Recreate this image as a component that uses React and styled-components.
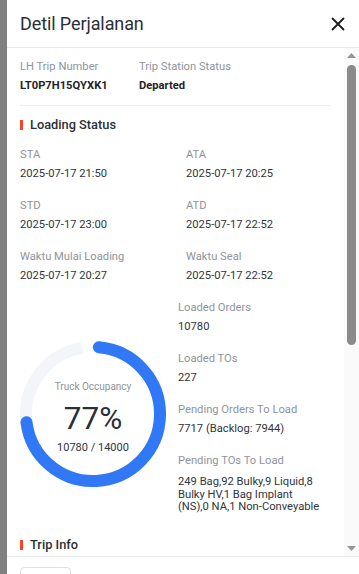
import React from "react";
import styled, { createGlobalStyle } from "styled-components";

const GlobalStyle = createGlobalStyle`
  html, body { margin: 0; padding: 0; height: 100%; }
  body { background: #808080; font-family: Roboto, "Noto Sans", Arial, sans-serif; }
  #root { height: 100%; }
  * { box-sizing: border-box; }
`;

const Page = styled.div`
  height: 100vh;
  display: flex;
  justify-content: flex-end;
`;

const Drawer = styled.div`
  width: 352px;
  height: 100%;
  background: #fff;
  display: flex;
  flex-direction: column;
`;

const Header = styled.div`
  height: 48px;
  flex: none;
  border-bottom: 1px solid #e6e8eb;
  padding: 0 13px;
  display: flex;
  align-items: center;
  justify-content: space-between;
`;

const Title = styled.div`
  font-size: 18px;
  color: #2b2f36;
  letter-spacing: -0.1px;
`;

const CloseBtn = styled.button`
  border: 0;
  background: none;
  padding: 0;
  width: 14px;
  height: 14px;
  margin-right: 1px;
  display: flex;
  cursor: pointer;
`;

const Body = styled.div`
  flex: 1;
  min-height: 0;
  display: flex;
`;

const Content = styled.div`
  flex: 1;
  overflow: hidden;
  padding: 11px 13px 0;
`;

const ScrollTrack = styled.div`
  width: 15px;
  flex: none;
  background: #fafafa;
  display: flex;
  flex-direction: column;
  align-items: center;
`;

const Arrow = styled.div`
  height: 15px;
  flex: none;
  display: flex;
  align-items: center;
  justify-content: center;
  margin-top: ${(p) => (p.$down ? "auto" : "0")};
  svg { transform: ${(p) => (p.$down ? "rotate(180deg)" : "none")}; }
`;

const Thumb = styled.div`
  width: 9px;
  height: 280px;
  margin-top: 2px;
  border-radius: 5px;
  background: #8b8b8b;
`;

const InfoRow = styled.div`
  display: flex;
  padding-bottom: 11px;
  border-bottom: 1px solid #eceef1;
`;

const Field = styled.div`
  width: ${(p) => p.$w || "auto"};
  margin-top: ${(p) => p.$mt ?? 0}px;
  margin-bottom: ${(p) => p.$mb ?? 16}px;
`;

const Label = styled.div`
  font-size: 11.2px;
  line-height: 16px;
  color: #8f949c;
  margin-bottom: 3px;
  white-space: nowrap;
`;

const Value = styled.div`
  font-size: 11.2px;
  line-height: ${(p) => (p.$tight ? "12.5px" : "16px")};
  color: ${(p) => (p.$bold ? "#1f2329" : "#30343b")};
  font-weight: ${(p) => (p.$bold ? 700 : 400)};
  padding-top: ${(p) => (p.$tight ? "4px" : "0")};
`;

const SectionTitle = styled.div`
  display: flex;
  align-items: center;
  gap: 7px;
  font-size: 12.8px;
  line-height: 20px;
  font-weight: 500;
  color: #2b2f36;
  margin: ${(p) => p.$m || "9px 0 12px"};
  &::before {
    content: "";
    width: 3px;
    height: 10px;
    background: #f2452b;
  }
`;

const Grid = styled.div`
  display: grid;
  grid-template-columns: 166px 1fr;
`;

const Split = styled.div`
  display: flex;
  align-items: flex-start;
`;

const RingWrap = styled.div`
  position: relative;
  width: 146px;
  height: 146px;
  margin-top: 41px;
  flex: none;
`;

const RingText = styled.div`
  position: absolute;
  inset: 0;
  display: flex;
  flex-direction: column;
  align-items: center;
  padding-top: 39px;
`;

const RingLabel = styled.div`
  font-size: 10px;
  line-height: 14px;
  color: #8f949c;
`;

const RingPct = styled.div`
  font-size: 31.5px;
  line-height: 38px;
  color: #2b2f36;
  margin: 6px 0 2px;
`;

const RingSub = styled.div`
  font-size: 11px;
  line-height: 16px;
  color: #30343b;
`;

const RightCol = styled.div`
  margin-left: 12px;
  width: 144px;
`;

const Footer = styled.div`
  height: 18px;
  flex: none;
  border-top: 1px solid #e6e8eb;
  padding: 10px 13px 0;
  overflow: hidden;
`;

const FooterBtn = styled.div`
  width: 51px;
  height: 30px;
  border: 1px solid #dcdfe6;
  border-radius: 4px;
`;

function polar(cx, cy, r, deg) {
  const a = ((deg - 90) * Math.PI) / 180;
  return [cx + r * Math.cos(a), cy + r * Math.sin(a)];
}
function arc(cx, cy, r, a0, a1) {
  const [x0, y0] = polar(cx, cy, r, a0);
  const [x1, y1] = polar(cx, cy, r, a1);
  const large = a1 - a0 > 180 ? 1 : 0;
  return `M ${x0} ${y0} A ${r} ${r} 0 ${large} 1 ${x1} ${y1}`;
}

function Ring() {
  const c = 73;
  const r = 67;
  return (
    <RingWrap>
      <svg width="146" height="146" viewBox="0 0 146 146">
        <path d={arc(c, c, r, 262, 351)} fill="none" stroke="#f3f5f9" strokeWidth="12" />
        <path d={arc(c, c, r, 5, 263)} fill="none" stroke="#3178f6" strokeWidth="12" strokeLinecap="round" />
      </svg>
      <RingText>
        <RingLabel>Truck Occupancy</RingLabel>
        <RingPct>77%</RingPct>
        <RingSub>10780 / 14000</RingSub>
      </RingText>
    </RingWrap>
  );
}

const Tri = () => (
  <svg width="9" height="5" viewBox="0 0 9 5">
    <path d="M0 5 L4.5 0 L9 5 Z" fill="#959595" />
  </svg>
);

const times = [
  ["STA", "2025-07-17 21:50"],
  ["ATA", "2025-07-17 20:25"],
  ["STD", "2025-07-17 23:00"],
  ["ATD", "2025-07-17 22:52"],
  ["Waktu Mulai Loading", "2025-07-17 20:27"],
  ["Waktu Seal", "2025-07-17 22:52"],
];

const counts = [
  ["Loaded Orders", "10780"],
  ["Loaded TOs", "227"],
  ["Pending Orders To Load", "7717 (Backlog: 7944)"],
];

export default function App() {
  return (
    <>
      <GlobalStyle />
      <Page>
        <Drawer>
          <Header>
            <Title>Detil Perjalanan</Title>
            <CloseBtn aria-label="close">
              <svg width="14" height="14" viewBox="0 0 14 14">
                <path d="M1.5 1.5 L12.5 12.5 M12.5 1.5 L1.5 12.5" stroke="#1a1a1a" strokeWidth="1.8" strokeLinecap="round" />
              </svg>
            </CloseBtn>
          </Header>
          <Body>
            <Content>
              <InfoRow>
                <Field $w="119px" $mb={0}>
                  <Label>LH Trip Number</Label>
                  <Value $bold>LT0P7H15QYXK1</Value>
                </Field>
                <Field $mb={0}>
                  <Label>Trip Station Status</Label>
                  <Value $bold>Departed</Value>
                </Field>
              </InfoRow>
              <SectionTitle>Loading Status</SectionTitle>
              <Grid>
                {times.map(([l, v]) => (
                  <Field key={l}>
                    <Label>{l}</Label>
                    <Value>{v}</Value>
                  </Field>
                ))}
              </Grid>
              <Split>
                <Ring />
                <RightCol>
                  {counts.map(([l, v]) => (
                    <Field key={l}>
                      <Label>{l}</Label>
                      <Value>{v}</Value>
                    </Field>
                  ))}
                  <Field $mb={0} $mt={2}>
                    <Label>Pending TOs To Load</Label>
                    <Value $tight>
                      249 Bag,92 Bulky,9 Liquid,8 Bulky HV,1 Bag Implant (NS),0 NA,1 Non-Conveyable
                    </Value>
                  </Field>
                </RightCol>
              </Split>
              <SectionTitle $m="21px 0 12px">Trip Info</SectionTitle>
            </Content>
            <ScrollTrack>
              <Arrow>
                <Tri />
              </Arrow>
              <Thumb />
              <Arrow $down>
                <Tri />
              </Arrow>
            </ScrollTrack>
          </Body>
          <Footer>
            <FooterBtn />
          </Footer>
        </Drawer>
      </Page>
    </>
  );
}
